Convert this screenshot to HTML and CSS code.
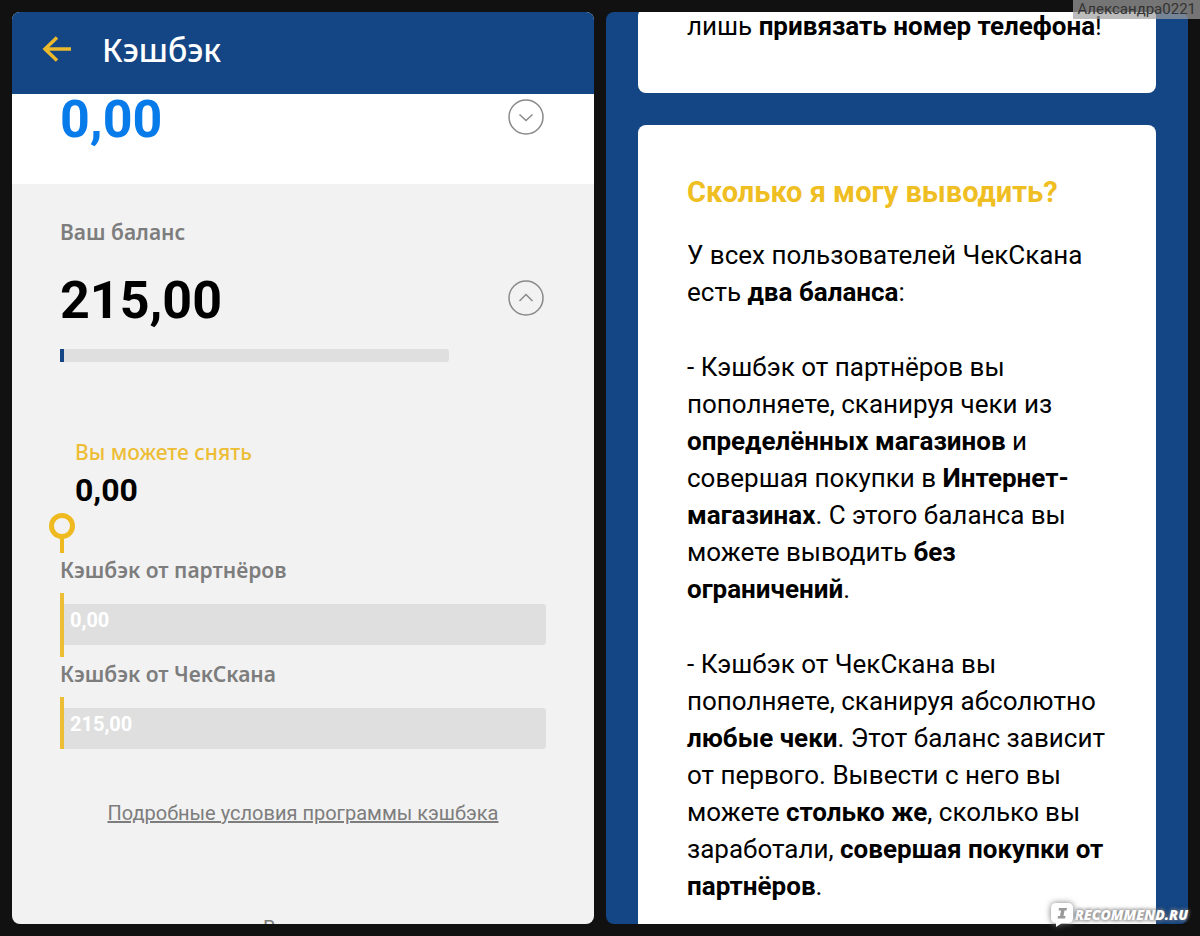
FILE: index.html
```html
<!DOCTYPE html>
<html lang="ru">
<head>
  <meta charset="UTF-8" />
  <meta name="viewport" content="width=device-width, initial-scale=1.0" />
  <title>Кэшбэк</title>
  <link rel="stylesheet" href="styles.css">
</head>
<body>
  <main class="screens">
    <section class="screen balance-screen">
      <header class="topbar">
        <button type="button" class="back" aria-label="Назад">
          <svg width="30" height="28" viewBox="0 0 30 28" fill="none" stroke="#eab92c" stroke-width="3.500">
            <path d="M29 13H3M15 1.500L3 13l12 11.500" />
          </svg>
        </button>
        <h1>Кэшбэк</h1>
      </header>

      <div class="summary amount-row">
        <span class="amount blue">0,00</span>
        <button type="button" class="toggle" aria-label="Развернуть">
          <svg width="36" height="36" viewBox="0 0 36 36" fill="none" stroke="#8a8a8a" stroke-width="1.500">
            <circle cx="18" cy="18" r="17" />
            <path d="M11.500 15.500l6.500 6 6.500-6" />
          </svg>
        </button>
      </div>

      <div class="details">
        <h2 class="label">Ваш баланс</h2>
        <div class="amount-row">
          <span class="amount">215,00</span>
          <button type="button" class="toggle" aria-label="Свернуть">
            <svg width="36" height="36" viewBox="0 0 36 36" fill="none" stroke="#8a8a8a" stroke-width="1.500">
              <circle cx="18" cy="18" r="17" />
              <path d="M11.500 21l6.500-6.500 6.500 6.500" />
            </svg>
          </button>
        </div>
        <div class="progress"><div class="progress-fill"></div></div>

        <div class="available">
          <p class="label yellow">Вы можете снять</p>
          <p class="available-amount">0,00</p>
        </div>
        <svg class="pin" width="26" height="40" viewBox="0 0 26 40" fill="none" stroke="#efba20">
          <circle cx="13" cy="13" r="10.500" stroke-width="5" />
          <path d="M13 25v15" stroke-width="4" />
        </svg>

        <h3 class="label source">Кэшбэк от партнёров</h3>
        <div class="bar-line"><div class="bar">0,00</div></div>
        <h3 class="label source">Кэшбэк от ЧекСкана</h3>
        <div class="bar-line last"><div class="bar">215,00</div></div>

        <a class="terms" href="#terms">Подробные условия программы кэшбэка</a>
        <p class="more">В</p>
      </div>
    </section>

    <section class="screen faq-screen">
      <article class="card card-top">
        <p>лишь <b>привязать номер телефона</b>!</p>
      </article>
      <article class="card">
        <h2>Сколько я могу выводить?</h2>
        <p>У всех пользователей ЧекСкана есть <b>два баланса</b>:</p>
        <p>- Кэшбэк от партнёров вы пополняете, сканируя чеки из <b>определённых магазинов</b> и совершая покупки в <b>Интернет-магазинах</b>. С этого баланса вы можете выводить <b>без ограничений</b>.</p>
        <p>- Кэшбэк от ЧекСкана вы пополняете, сканируя абсолютно <b>любые чеки</b>. Этот баланс зависит от первого. Вывести с него вы можете <b>столько же</b>, сколько вы заработали, <b>совершая покупки от партнёров</b>.</p>
      </article>
    </section>
  </main>

  <div class="user-tag">Александра0221</div>
  <div class="site-tag">
    <svg width="22" height="24" viewBox="0 0 22 24">
      <path d="M5 0h12q5 0 5 5v10q0 5-5 5H11l-6 4v-4Q0 20 0 15V5Q0 0 5 0z" fill="#fff" />
      <path d="M8 5h8l-.5 2.500h-2L12.500 13h2L14 15.500H6.500L7 13h2L10 7.500H7.500z" fill="#999" />
    </svg>
    <span>RECOMMEND.RU</span>
  </div>
</body>
</html>
```

FILE: styles.css
```css
* {
  margin: 0;
  padding: 0;
  box-sizing: border-box;
}

body {
  position: relative;
  background: #111111;
  color: #000;
  font-family: Roboto, sans-serif;
}

button {
  display: flex;
  background: none;
  border: none;
  cursor: pointer;
}

.screens {
  display: grid;
  grid-template-columns: 1fr 1fr;
  gap: 12px;
  height: 100vh;
  padding: 12px;
}

.screen {
  overflow: hidden;
  border-radius: 8px;
}

.balance-screen {
  background: #f2f2f2;
}

.topbar {
  display: flex;
  align-items: center;
  gap: 30px;
  height: 82px;
  padding: 0 30px 6px;
  background: #144585;
}

.topbar h1 {
  color: #fff;
  font-family: "Noto Sans", sans-serif;
  font-size: 32px;
  font-weight: 500;
  line-height: 40px;
}

.amount-row {
  display: flex;
  justify-content: space-between;
  align-items: center;
}

.summary {
  height: 90px;
  padding: 0 50px 38px 48px;
  background: #fff;
}

.amount {
  font-size: 52px;
  font-weight: 700;
  line-height: 60px;
}

.toggle {
  margin-bottom: 6px;
}

.blue {
  color: #087bea;
}

.details {
  padding: 33px 48px 0;
}

.details .amount-row {
  margin-top: 24px;
  padding-right: 2px;
}

.label {
  color: #7d7d7d;
  font-family: "Noto Sans", sans-serif;
  font-size: 21px;
  font-weight: 600;
  line-height: 30px;
}

.progress {
  width: 80%;
  height: 13px;
  margin-top: 18px;
  border-radius: 0 3px 3px 0;
  background: #dfdfdf;
  overflow: hidden;
}

.progress-fill {
  width: 1%;
  height: 100%;
  background: #144585;
}

.available {
  margin-top: 75px;
  padding-left: 15px;
}

.label.yellow {
  color: #edbd35;
  font-weight: 500;
}

.available-amount {
  font-size: 32px;
  font-weight: 700;
  line-height: 46px;
}

.pin {
  display: block;
  margin-left: -11px;
}

.source {
  padding: 2px 0 8px;
}

.bar-line {
  padding: 11px 0 12px;
  border-left: 4px solid #edbd35;
}

.bar-line.last {
  padding-bottom: 0;
}

.bar {
  height: 41px;
  padding: 4px 6px;
  border-radius: 0 3px 3px 0;
  background: #dfdfdf;
  color: #fff;
  font-size: 20px;
  font-weight: 700;
  line-height: 24px;
}

.terms {
  display: block;
  margin-top: 49px;
  color: #7d7d7d;
  font-size: 20px;
  line-height: 30px;
  text-align: center;
}

.more {
  margin-top: 85px;
  padding-left: 203px;
  color: #7d7d7d;
  font-size: 20px;
  line-height: 30px;
}

.faq-screen {
  padding: 0 32px;
  background: #144585;
}

.card {
  margin-top: 32px;
  padding: 49px 48px 48px 49px;
  border-radius: 8px;
  background: #fff;
  font-size: 26px;
  line-height: 37px;
}

.card-top {
  margin-top: -4px;
  padding-top: 0;
}

.card h2 {
  margin-bottom: 26px;
  color: #efbe22;
  font-size: 29px;
  line-height: 37px;
}

.card p + p {
  margin-top: 38px;
}

.user-tag {
  position: absolute;
  top: 0;
  right: 0;
  padding: 0 4px;
  background: rgba(160, 160, 160, 0.7);
  color: #333;
  font-size: 15px;
  line-height: 19px;
}

.site-tag {
  position: absolute;
  right: 12px;
  bottom: 9px;
  display: flex;
  align-items: center;
  gap: 2px;
  color: #fff;
  font-family: "Open Sans", sans-serif;
  font-size: 14px;
  font-style: italic;
  font-weight: 800;
  line-height: 24px;
  text-shadow: 0 0 4px #777, 0 0 4px #777;
}

.site-tag svg {
  filter: drop-shadow(0 0 3px #777);
}
```
